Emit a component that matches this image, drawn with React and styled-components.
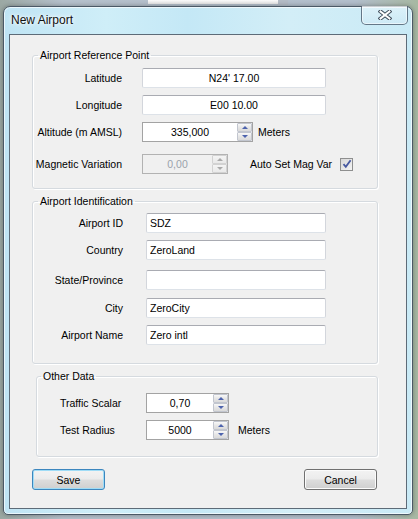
import React from 'react';
import styled, { createGlobalStyle } from 'styled-components';

const Global = createGlobalStyle`
  html, body { margin: 0; padding: 0; }
  body {
    font-family: "Liberation Sans", Arial, sans-serif;
    font-size: 10.5px;
    color: #000;
  }
  * { box-sizing: border-box; }
`;

const Desktop = styled.div`
  width: 418px;
  height: 519px;
  padding: 6px 5px 4px 3px;
  overflow: hidden;
  background:
    linear-gradient(#fbfbfb, #e6e6e6) 148px 0 / 130px 4px no-repeat,
    linear-gradient(#b4bcc6, #b4bcc6) 277px 0 / 11px 5px no-repeat,
    linear-gradient(90deg, #9ba8a3 0, #b6c1cc 15%, #b3bfcc 85%, #a7b8a2 100%);
`;

const Window = styled.div`
  width: 410px;
  height: 509px;
  border: 1px solid #4b5966;
  border-radius: 7px 7px 5px 5px;
  padding: 0 5px 5px;
  display: flex;
  flex-direction: column;
  background:
    linear-gradient(90deg, #bfe4f4 0, #cfeef8 25%, #c4e8f6 45%, #d3eef7 70%, #c9eaf6 100%);
  box-shadow: inset 0 0 0 1px rgba(255, 255, 255, 0.65), 0 0 5px rgba(0, 0, 0, 0.35);
`;

const TitleBar = styled.div`
  height: 27px;
  display: flex;
  justify-content: space-between;
  align-items: flex-start;
  padding-left: 2px;
`;

const Title = styled.div`
  font-size: 12px;
  line-height: 27px;
  color: #111;
  text-shadow: 0 0 6px #fff, 0 0 3px #fff;
`;

const CloseButton = styled.div`
  width: 47px;
  height: 19px;
  margin-top: -1px;
  margin-right: -1px;
  border: 1px solid rgba(60, 78, 96, 0.75);
  border-top: none;
  border-radius: 0 0 5px 5px;
  display: flex;
  align-items: center;
  justify-content: center;
  background: linear-gradient(rgba(255, 255, 255, 0.35), rgba(210, 232, 244, 0.35));
  box-shadow: inset 0 0 0 1px rgba(255, 255, 255, 0.55);
`;

const Client = styled.div`
  flex: 1;
  border: 1px solid #5d6b78;
  background: #f0f0f0;
  display: flex;
  flex-direction: column;
`;

const Group = styled.fieldset`
  margin: ${(p) => p.$mt}px 28px 0 ${(p) => p.$ml}px;
  padding: 0;
  border: 1px solid #d5dadf;
  border-radius: 3px;
  box-shadow: inset 1px 1px 0 #fff, 1px 1px 0 #fff;
`;

const Legend = styled.legend`
  margin-left: ${(p) => p.$ml}px;
  padding: 0 2px;
  line-height: 12px;
  font-size: 10.5px;
`;

const GroupBody = styled.div`
  padding: ${(p) => p.$pt}px 0 ${(p) => p.$pb}px ${(p) => p.$pl || 0}px;
`;

const Row = styled.div`
  display: flex;
  align-items: center;
  height: 20px;
  margin-top: ${(p) => p.$mt || 0}px;
`;

const Label = styled.div`
  flex: 0 0 ${(p) => p.$w}px;
  margin-right: ${(p) => p.$gap || 0}px;
  display: flex;
  justify-content: ${(p) => (p.$left ? 'flex-start' : 'flex-end')};
  white-space: nowrap;
`;

const TextBox = styled.input`
  width: ${(p) => p.$w}px;
  height: 20px;
  margin: 0;
  padding: 0 3px;
  border: 1px solid;
  border-color: #a9abb2 #d3d6dc #dde2e8 #d3d6dc;
  border-radius: 2px;
  background: #fff;
  font: inherit;
  color: #000;
  text-align: ${(p) => (p.$center ? 'center' : 'left')};
  outline: none;
`;

const SpinBox = styled.div`
  width: ${(p) => p.$w}px;
  height: 20px;
  display: flex;
  border: 1px solid ${(p) => (p.$disabled ? '#b2b2b2' : '#a3a3a3')};
  background: ${(p) => (p.$disabled ? '#f0f0f0' : '#fff')};
`;

const SpinValue = styled.div`
  flex: 1;
  display: flex;
  align-items: center;
  justify-content: center;
  color: ${(p) => (p.$disabled ? '#9aa2ab' : '#000')};
`;

const SpinButtons = styled.div`
  width: 15px;
  display: flex;
  flex-direction: column;
`;

const SpinButton = styled.div`
  flex: 1;
  border: 1px solid ${(p) => (p.$disabled ? '#d2d2d2' : '#c2c6cf')};
  border-radius: 1px;
  background: ${(p) =>
    p.$disabled
      ? 'linear-gradient(#f4f4f4, #e9e9e9)'
      : 'linear-gradient(#f8f8f8, #e6e6e6 50%, #dadada)'};
  display: flex;
  align-items: center;
  justify-content: center;
`;

const Arrow = styled.div`
  width: 0;
  height: 0;
  border-left: 3px solid transparent;
  border-right: 3px solid transparent;
  ${(p) => (p.$down ? 'border-top' : 'border-bottom')}: 3px solid
    ${(p) => (p.$disabled ? '#a9a9a9' : '#4d63ad')};
`;

const Unit = styled.div`
  margin-left: ${(p) => p.$ml}px;
  white-space: nowrap;
`;

const CheckBox = styled.div`
  width: 13px;
  height: 13px;
  margin-left: 8px;
  border: 1px solid #8e8f8f;
  background: linear-gradient(135deg, #d8d8d8, #f4f4f4);
  display: flex;
  align-items: center;
  justify-content: center;
`;

const ButtonRow = styled.div`
  margin: 12px 29px 0 22px;
  display: flex;
  justify-content: space-between;
`;

const Button = styled.div`
  width: 73px;
  height: 21px;
  border-radius: 3px;
  display: flex;
  align-items: center;
  justify-content: center;
  border: 1px solid ${(p) => (p.$default ? '#3c86be' : '#707070')};
  box-shadow: inset 0 0 0 1px ${(p) => (p.$default ? '#9fdcf6' : '#fbfbfb')};
  background: linear-gradient(#f3f3f3 0, #ebebeb 48%, #dddddd 52%, #cfcfcf 100%);
`;

function Spin({ w, value, disabled }) {
  return (
    <SpinBox $w={w} $disabled={disabled}>
      <SpinValue $disabled={disabled}>{value}</SpinValue>
      <SpinButtons>
        <SpinButton $disabled={disabled}>
          <Arrow $disabled={disabled} />
        </SpinButton>
        <SpinButton $disabled={disabled}>
          <Arrow $down $disabled={disabled} />
        </SpinButton>
      </SpinButtons>
    </SpinBox>
  );
}

export default function App() {
  return (
    <>
      <Global />
      <Desktop>
        <Window>
          <TitleBar>
            <Title>New Airport</Title>
            <CloseButton>
              <svg width="14" height="10" viewBox="0 0 14 10">
                <path d="M2.5 1.5 L11.5 8.5 M11.5 1.5 L2.5 8.5" stroke="#3e4c5a" strokeWidth="4" strokeLinecap="square" />
                <path d="M2.5 1.5 L11.5 8.5 M11.5 1.5 L2.5 8.5" stroke="#fff" strokeWidth="2" strokeLinecap="square" />
              </svg>
            </CloseButton>
          </TitleBar>
          <Client>
            <Group $mt={14} $ml={22}>
              <Legend $ml={5}>Airport Reference Point</Legend>
              <GroupBody $pt={7} $pb={14}>
                <Row>
                  <Label $w={89} $gap={20}>Latitude</Label>
                  <TextBox $w={184} $center readOnly value="N24' 17.00" />
                </Row>
                <Row $mt={7}>
                  <Label $w={89} $gap={20}>Longitude</Label>
                  <TextBox $w={184} $center readOnly value="E00 10.00" />
                </Row>
                <Row $mt={7}>
                  <Label $w={89} $gap={20}>Altitude (m AMSL)</Label>
                  <Spin w={111} value="335,000" />
                  <Unit $ml={5}>Meters</Unit>
                </Row>
                <Row $mt={12}>
                  <Label $w={89} $gap={20}>Magnetic Variation</Label>
                  <Spin w={86} value="0,00" disabled />
                  <Unit $ml={22}>Auto Set Mag Var</Unit>
                  <CheckBox>
                    <svg width="10" height="10" viewBox="0 0 10 10">
                      <path d="M1.5 5.2 L3.8 7.8 L8.6 1.2" fill="none" stroke="#4658a0" strokeWidth="1.8" />
                    </svg>
                  </CheckBox>
                </Row>
              </GroupBody>
            </Group>

            <Group $mt={6} $ml={22}>
              <Legend $ml={5}>Airport Identification</Legend>
              <GroupBody $pt={6} $pb={18}>
                <Row>
                  <Label $w={90} $gap={23}>Airport ID</Label>
                  <TextBox $w={180} readOnly value="SDZ" />
                </Row>
                <Row $mt={7}>
                  <Label $w={90} $gap={23}>Country</Label>
                  <TextBox $w={180} readOnly value="ZeroLand" />
                </Row>
                <Row $mt={10}>
                  <Label $w={90} $gap={23}>State/Province</Label>
                  <TextBox $w={180} readOnly value="" />
                </Row>
                <Row $mt={8}>
                  <Label $w={90} $gap={23}>City</Label>
                  <TextBox $w={180} readOnly value="ZeroCity" />
                </Row>
                <Row $mt={7}>
                  <Label $w={90} $gap={23}>Airport Name</Label>
                  <TextBox $w={180} readOnly value="Zero intl" />
                </Row>
              </GroupBody>
            </Group>

            <Group $mt={6} $ml={26}>
              <Legend $ml={4}>Other Data</Legend>
              <GroupBody $pt={11} $pb={16} $pl={23}>
                <Row>
                  <Label $w={86} $left>Traffic Scalar</Label>
                  <Spin w={83} value="0,70" />
                </Row>
                <Row $mt={7}>
                  <Label $w={86} $left>Test Radius</Label>
                  <Spin w={83} value="5000" />
                  <Unit $ml={9}>Meters</Unit>
                </Row>
              </GroupBody>
            </Group>

            <ButtonRow>
              <Button $default>Save</Button>
              <Button>Cancel</Button>
            </ButtonRow>
          </Client>
        </Window>
      </Desktop>
    </>
  );
}
